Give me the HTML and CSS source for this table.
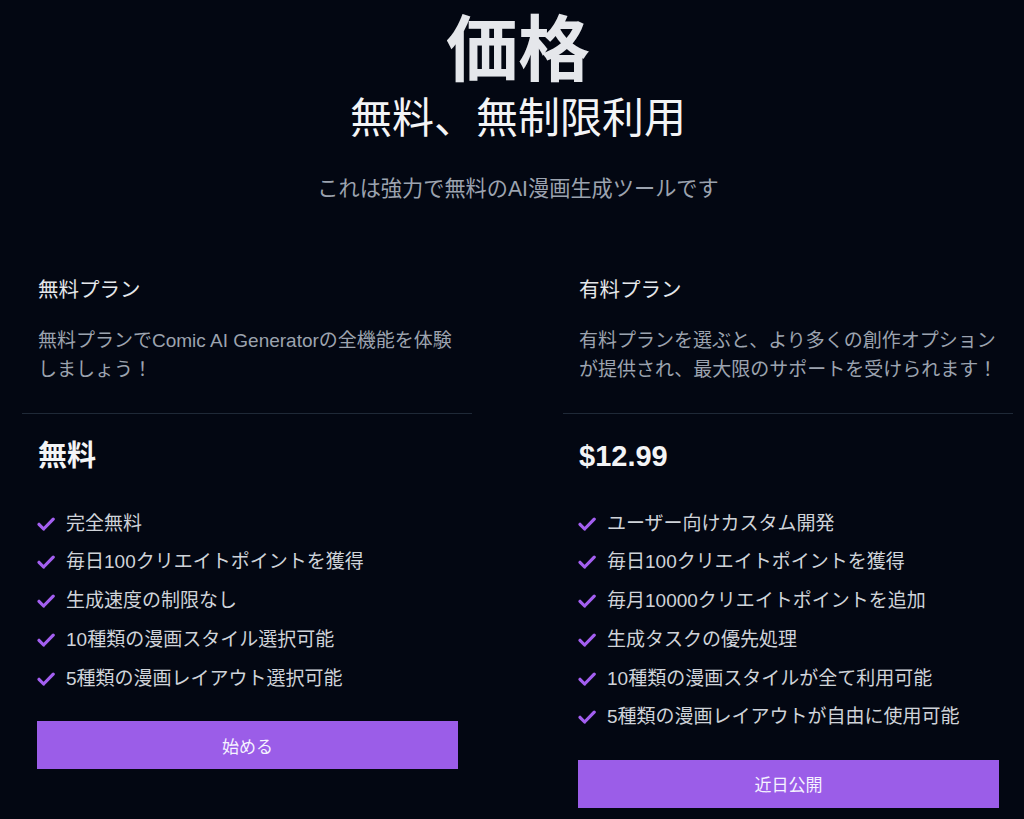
FILE: index.html
```html
<!DOCTYPE html>
<html lang="ja">
<head>
<meta charset="utf-8">
<title>価格</title>
<link rel="stylesheet" href="styles.css">
</head>
<body>
<main class="page">
  <header class="hero">
    <h1 class="hero-title">価格</h1>
    <h2 class="hero-sub">無料、無制限利用</h2>
    <p class="hero-desc">これは強力で無料のAI漫画生成ツールです</p>
  </header>

  <section class="plans">
    <article class="plan">
      <div class="plan-head">
        <h3 class="plan-name">無料プラン</h3>
        <p class="plan-desc">無料プランでComic AI Generatorの全機能を体験しましょう！</p>
      </div>
      <div class="plan-body">
        <div class="plan-price">無料</div>
        <ul class="features">
          <li class="feature"><svg class="check" viewBox="0 0 18 14" width="18" height="14"><path d="M2 7.3 L6.6 12 L16.2 2.2"/></svg><span>完全無料</span></li>
          <li class="feature"><svg class="check" viewBox="0 0 18 14" width="18" height="14"><path d="M2 7.3 L6.6 12 L16.2 2.2"/></svg><span>毎日100クリエイトポイントを獲得</span></li>
          <li class="feature"><svg class="check" viewBox="0 0 18 14" width="18" height="14"><path d="M2 7.3 L6.6 12 L16.2 2.2"/></svg><span>生成速度の制限なし</span></li>
          <li class="feature"><svg class="check" viewBox="0 0 18 14" width="18" height="14"><path d="M2 7.3 L6.6 12 L16.2 2.2"/></svg><span>10種類の漫画スタイル選択可能</span></li>
          <li class="feature"><svg class="check" viewBox="0 0 18 14" width="18" height="14"><path d="M2 7.3 L6.6 12 L16.2 2.2"/></svg><span>5種類の漫画レイアウト選択可能</span></li>
        </ul>
        <button class="plan-btn" type="button">始める</button>
      </div>
    </article>

    <article class="plan">
      <div class="plan-head">
        <h3 class="plan-name">有料プラン</h3>
        <p class="plan-desc">有料プランを選ぶと、より多くの創作オプションが提供され、最大限のサポートを受けられます！</p>
      </div>
      <div class="plan-body">
        <div class="plan-price">$12.99</div>
        <ul class="features">
          <li class="feature"><svg class="check" viewBox="0 0 18 14" width="18" height="14"><path d="M2 7.3 L6.6 12 L16.2 2.2"/></svg><span>ユーザー向けカスタム開発</span></li>
          <li class="feature"><svg class="check" viewBox="0 0 18 14" width="18" height="14"><path d="M2 7.3 L6.6 12 L16.2 2.2"/></svg><span>毎日100クリエイトポイントを獲得</span></li>
          <li class="feature"><svg class="check" viewBox="0 0 18 14" width="18" height="14"><path d="M2 7.3 L6.6 12 L16.2 2.2"/></svg><span>毎月10000クリエイトポイントを追加</span></li>
          <li class="feature"><svg class="check" viewBox="0 0 18 14" width="18" height="14"><path d="M2 7.3 L6.6 12 L16.2 2.2"/></svg><span>生成タスクの優先処理</span></li>
          <li class="feature"><svg class="check" viewBox="0 0 18 14" width="18" height="14"><path d="M2 7.3 L6.6 12 L16.2 2.2"/></svg><span>10種類の漫画スタイルが全て利用可能</span></li>
          <li class="feature"><svg class="check" viewBox="0 0 18 14" width="18" height="14"><path d="M2 7.3 L6.6 12 L16.2 2.2"/></svg><span>5種類の漫画レイアウトが自由に使用可能</span></li>
        </ul>
        <button class="plan-btn" type="button">近日公開</button>
      </div>
    </article>
  </section>
</main>
</body>
</html>
```

FILE: styles.css
```css
html, body {
  margin: 0;
  padding: 0;
  background: #030712;
}

body {
  font-family: "Liberation Sans", "Noto Sans CJK JP", sans-serif;
  color: #e5e7eb;
  min-height: 819px;
}

.page {
  width: 992px;
  margin-left: 22px;
  padding-top: 10px;
  padding-bottom: 20px;
}

.hero {
  display: flex;
  flex-direction: column;
  align-items: center;
  text-align: center;
}

.hero-title {
  margin: 0;
  font-size: 72px;
  line-height: 80px;
  font-weight: 700;
  color: #e5e7eb;
}

.hero-sub {
  margin: 4px 0 0;
  font-size: 42px;
  line-height: 50px;
  font-weight: 400;
  color: #f3f4f6;
}

.hero-desc {
  margin: 30px 0 0;
  font-size: 21.2px;
  line-height: 30px;
  color: #9ca3af;
}

.plans {
  display: grid;
  grid-template-columns: 450px 450px;
  column-gap: 91px;
  margin-top: 71px;
  align-items: start;
}

.plan {
  display: flex;
  flex-direction: column;
}

.plan-head {
  padding: 0 15px 29.5px 16px;
  border-bottom: 1px solid #1f2937;
}

.plan-name {
  margin: 0;
  font-size: 20.5px;
  line-height: 30px;
  font-weight: 400;
  color: #e5e7eb;
}

.plan-desc {
  margin: 20.5px 0 0;
  font-size: 19px;
  line-height: 29px;
  color: #9ca3af;
}

.plan-body {
  padding: 21.5px 14px 0 15px;
  display: flex;
  flex-direction: column;
}

.plan-price {
  padding-left: 1px;
  font-size: 29px;
  line-height: 40px;
  font-weight: 700;
  color: #f3f4f6;
}

.features {
  list-style: none;
  margin: 33px 0 0;
  padding: 0;
  display: flex;
  flex-direction: column;
  gap: 9.75px;
}

.feature {
  display: flex;
  align-items: center;
  gap: 11px;
  font-size: 19px;
  line-height: 29px;
  color: #cfd3d9;
}

.check {
  flex: none;
  margin-top: 1px;
}

.check path {
  fill: none;
  stroke: #a35ff0;
  stroke-width: 3.2;
  stroke-linecap: round;
  stroke-linejoin: round;
}

.plan-btn {
  margin-top: 28.5px;
  height: 48px;
  width: 100%;
  border: 0;
  border-radius: 0;
  background: #9b5de8;
  color: #f5f3ff;
  font-family: "Liberation Sans", "Noto Sans CJK JP", sans-serif;
  font-size: 17px;
  cursor: pointer;
}
```
